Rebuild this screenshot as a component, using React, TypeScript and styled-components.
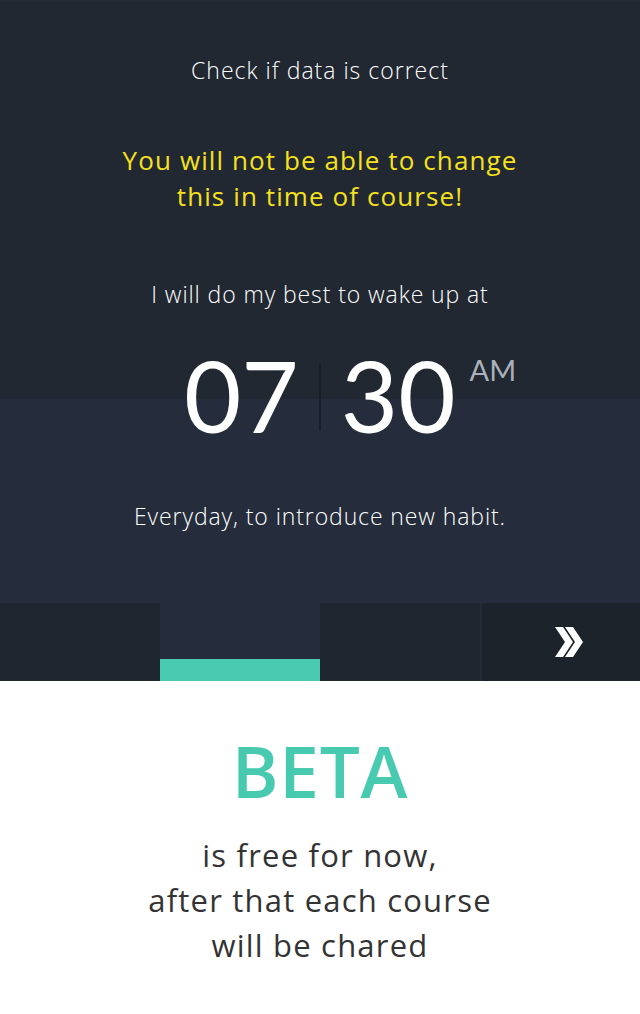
import styled, { createGlobalStyle } from "styled-components";

const GlobalStyle = createGlobalStyle`
    html, body {
        margin: 0;
        padding: 0;
        background: #ffffff;
    }
    body {
        font-family: "Open Sans", "Liberation Sans", sans-serif;
        -webkit-font-smoothing: antialiased;
    }
`;

const Page = styled.div`
    width: 640px;
    display: flex;
    flex-direction: column;
`;

const Panel = styled.section`
    height: 603px;
    display: flex;
    flex-direction: column;
    align-items: center;
    border-top: 2px solid #242b36;
    box-sizing: border-box;
    background: linear-gradient(to bottom, #212832 0, #212832 397px, #252c3b 397px);
    color: #ffffff;
    text-align: center;
`;

const Title = styled.h2`
    margin: 53px 0 0;
    font-size: 23px;
    font-weight: 300;
    line-height: 30px;
    letter-spacing: 1px;
`;

const Warning = styled.p`
    margin: 57px 0 0;
    font-size: 26px;
    font-weight: 400;
    line-height: 36px;
    letter-spacing: 1.1px;
    color: #f5e11e;
`;

const Lead = styled.p<{ $gap: number }>`
    margin: ${({ $gap }) => $gap}px 0 0;
    font-size: 23px;
    font-weight: 300;
    line-height: 30px;
    letter-spacing: 0.9px;
`;

const TimeRow = styled.div`
    margin-top: 36px;
    display: flex;
    align-items: flex-start;
    height: 100px;
    padding-left: 60px;
    font-family: Lato, "Open Sans", sans-serif;
`;

const Digits = styled.span`
    font-size: 99px;
    font-weight: 400;
    line-height: 100px;
`;

const Divider = styled.span`
    width: 2px;
    height: 68px;
    margin: 18px 20px 0;
    background: #1a1f27;
`;

const Meridiem = styled.span`
    margin: 10px 0 0 14px;
    font-size: 29px;
    font-weight: 400;
    line-height: 30px;
    color: #aab1bc;
`;

const Tabs = styled.nav`
    display: grid;
    grid-template-columns: repeat(4, 160px);
    height: 78px;
`;

const Tab = styled.div<{ $active?: boolean; $last?: boolean }>`
    position: relative;
    display: flex;
    align-items: center;
    justify-content: center;
    background: ${({ $active, $last }) => ($active ? "#252c3b" : $last ? "#1d232a" : "#20262f")};
    border-left: ${({ $last }) => ($last ? "2px solid #242a37" : "none")};
    box-sizing: border-box;
`;

const Indicator = styled.span`
    position: absolute;
    left: 0;
    right: 0;
    bottom: 0;
    height: 22px;
    background: #48cab0;
`;

const Footer = styled.section`
    height: 333px;
    display: flex;
    flex-direction: column;
    align-items: center;
    text-align: center;
`;

const Beta = styled.h1`
    margin: 50px 0 0;
    font-size: 71px;
    font-weight: 600;
    line-height: 80px;
    color: #48cab0;
    letter-spacing: 0.8px;
`;

const Note = styled.p`
    margin: 22px 0 0;
    font-size: 31px;
    font-weight: 400;
    line-height: 45px;
    letter-spacing: 1.2px;
    color: #333333;
`;

const NextIcon = () => (
    <svg width="30" height="30" viewBox="0 0 30 30" style={{ marginLeft: 18 }}>
        <polygon points="0,0 8,0 18,15 8,30 0,30 10,15" fill="#ffffff" />
        <polygon points="10,0 18,0 28,15 18,30 10,30 20,15" fill="#ffffff" />
    </svg>
);

export default function App() {
    return (
        <Page>
            <GlobalStyle />
            <Panel>
                <Title>Check if data is correct</Title>
                <Warning>
                    You will not be able to change
                    <br />
                    this in time of course!
                </Warning>
                <Lead $gap={65}>I will do my best to wake up at</Lead>
                <TimeRow>
                    <Digits>07</Digits>
                    <Divider />
                    <Digits>30</Digits>
                    <Meridiem>AM</Meridiem>
                </TimeRow>
                <Lead $gap={56}>Everyday, to introduce new habit.</Lead>
            </Panel>
            <Tabs>
                <Tab />
                <Tab $active>
                    <Indicator />
                </Tab>
                <Tab />
                <Tab $last>
                    <NextIcon />
                </Tab>
            </Tabs>
            <Footer>
                <Beta>BETA</Beta>
                <Note>
                    is free for now,
                    <br />
                    after that each course
                    <br />
                    will be chared
                </Note>
            </Footer>
        </Page>
    );
}
